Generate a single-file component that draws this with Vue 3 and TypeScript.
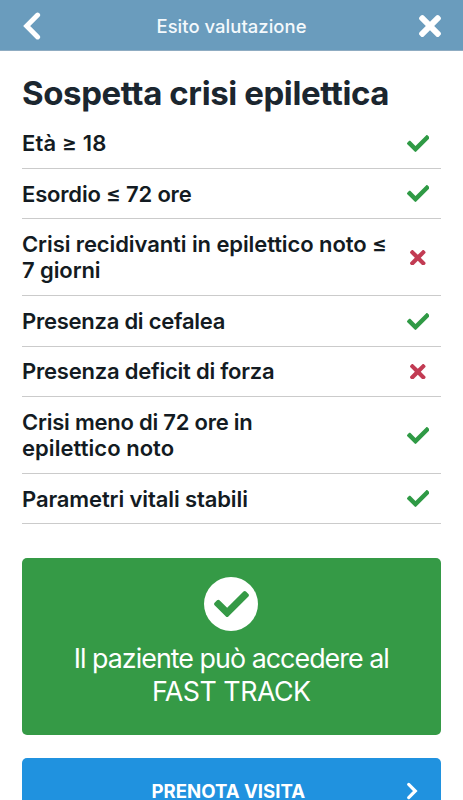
<script setup lang="ts">
interface Line {
  text: string
  // letter spacing in hundredths of a pixel
  track: number
}
interface Criterion {
  lines: Line[]
  met: boolean
}

const criteria: Criterion[] = [
  { lines: [{ text: 'Età ≥ 18', track: 18 }], met: true },
  { lines: [{ text: 'Esordio ≤ 72 ore', track: -18 }], met: true },
  {
    lines: [
      { text: 'Crisi recidivanti in epilettico noto ≤', track: -9 },
      { text: '7 giorni', track: -10 },
    ],
    met: false,
  },
  { lines: [{ text: 'Presenza di cefalea', track: -25 }], met: true },
  { lines: [{ text: 'Presenza deficit di forza', track: -22 }], met: false },
  {
    lines: [
      { text: 'Crisi meno di 72 ore in', track: -23 },
      { text: 'epilettico noto', track: 5 },
    ],
    met: true,
  },
  { lines: [{ text: 'Parametri vitali stabili', track: -11 }], met: true },
]

const checkPath =
  'M173.898 439.404l-166.4-166.4c-9.997-9.997-9.997-26.206 0-36.204l36.203-36.204c9.997-9.998 26.207-9.998 36.204 0L192 312.69 432.095 72.596c9.997-9.997 26.207-9.997 36.204 0l36.203 36.204c9.997 9.997 9.997 26.206 0 36.204l-294.4 294.401c-9.998 9.997-26.207 9.997-36.204-.001z'
const timesPath =
  'M242.72 256l100.07-100.07c12.28-12.28 12.28-32.19 0-44.48l-22.24-22.24c-12.28-12.28-32.19-12.28-44.48 0L176 189.28 75.93 89.21c-12.28-12.28-32.19-12.28-44.48 0L9.21 111.45c-12.28 12.28-12.28 32.19 0 44.48L109.28 256 9.21 356.07c-12.28 12.28-12.28 32.19 0 44.48l22.24 22.24c12.28 12.28 32.2 12.28 44.48 0L176 322.72l100.07 100.07c12.28 12.28 32.2 12.28 44.48 0l22.24-22.24c12.28-12.28 12.28-32.19 0-44.48L242.72 256z'
</script>

<template>
  <div class="screen">
    <header class="bar">
      <button class="bar-btn" type="button" aria-label="Indietro">
        <svg class="back" viewBox="0 0 18 28"><path d="M14.6 3.1 3.7 14l10.9 10.9" /></svg>
      </button>
      <span class="bar-title">Esito valutazione</span>
      <button class="bar-btn end" type="button" aria-label="Chiudi">
        <svg class="close" viewBox="0 80 352 352"><path :d="timesPath" /></svg>
      </button>
    </header>
    <main class="content">
      <h1>Sospetta crisi epilettica</h1>
      <ul class="list">
        <li v-for="(c, i) in criteria" :key="i" class="row">
          <span class="label">
            <span
              v-for="line in c.lines"
              :key="line.text"
              class="line"
              :style="{ letterSpacing: line.track / 100 + 'px' }"
              >{{ line.text }}</span
            >
          </span>
          <span class="mark">
            <svg v-if="c.met" class="check" viewBox="0 65 512 382"><path :d="checkPath" /></svg>
            <svg v-else class="times" viewBox="0 80 352 352"><path :d="timesPath" /></svg>
          </span>
        </li>
      </ul>
      <section class="result">
        <span class="badge">
          <svg viewBox="0 65 512 382"><path :d="checkPath" /></svg>
        </span>
        <p>Il paziente può accedere al<br /><span class="track">FAST TRACK</span></p>
      </section>
      <button class="book" type="button">
        <span>PRENOTA VISITA</span>
        <svg class="chev" viewBox="0 0 12 18"><path d="M2.7 2.4 9.3 9l-6.6 6.6" /></svg>
      </button>
    </main>
  </div>
</template>

<style>
body {
  background: #fff;
  overflow: hidden;
}
</style>

<style scoped>
.screen {
  height: 800px;
  overflow: hidden;
  font-family: Inter, 'Liberation Sans', sans-serif;
  color: #131b22;
  display: flex;
  flex-direction: column;
}
button {
  border: 0;
  margin: 0;
  padding: 0;
  background: none;
  font: inherit;
}
svg {
  display: block;
}
.bar {
  flex: none;
  box-sizing: border-box;
  height: 51px;
  padding: 1px 22px 0;
  background: #6a9cbd;
  border-bottom: 1px solid #8facc2;
  display: grid;
  grid-template-columns: 30px 1fr 30px;
  align-items: center;
}
.bar-btn {
  display: flex;
}
.bar-btn.end {
  justify-content: flex-end;
}
.back {
  width: 18px;
  height: 28px;
  margin-left: 1px;
  fill: none;
  stroke: #fff;
  stroke-width: 5;
  stroke-linecap: round;
}
.close {
  width: 22px;
  height: 22px;
  fill: #fff;
}
.bar-title {
  text-align: center;
  color: #f4f9fc;
  font-size: 18.4px;
  font-weight: 500;
  letter-spacing: 0.06px;
  line-height: 24px;
}
.content {
  flex: none;
  padding: 19px 22px 0;
}
h1 {
  margin: 0;
  color: #1b262f;
  font-size: 33px;
  line-height: 46px;
  font-weight: 700;
  letter-spacing: -0.4px;
  white-space: nowrap;
}
.list {
  list-style: none;
  width: 418.5px;
  margin: 2.3px 0 0;
  padding: 0;
}
.row {
  display: flex;
  align-items: center;
  justify-content: space-between;
  padding: 11.8px 0 11.2px;
  border-bottom: 1px solid #cbcbcb;
  font-size: 22px;
  line-height: 26.45px;
  font-weight: 600;
}
.line {
  display: block;
  white-space: nowrap;
}
.mark {
  width: 45px;
  flex: none;
  display: flex;
  justify-content: center;
}
.check {
  width: 22.6px;
  height: 17px;
  fill: #2f9a45;
}
.times {
  width: 15.6px;
  height: 15.6px;
  fill: #c23b53;
}
.result {
  box-sizing: border-box;
  width: 418.5px;
  height: 176.5px;
  margin-top: 34px;
  padding-top: 18.3px;
  border-radius: 5px;
  background: #359a46;
  color: #fff;
  display: flex;
  flex-direction: column;
  align-items: center;
}
.badge {
  width: 54px;
  height: 54px;
  border-radius: 50%;
  background: #fff;
  display: flex;
  align-items: center;
  justify-content: center;
}
.badge svg {
  width: 35px;
  height: 26px;
  fill: #359a46;
}
.result p {
  margin: 11px 0 0;
  text-align: center;
  font-size: 26.8px;
  line-height: 33px;
  font-weight: 400;
  letter-spacing: -0.95px;
  white-space: nowrap;
}
.result .track {
  letter-spacing: -0.5px;
}
.book {
  width: 418.5px;
  height: 66px;
  margin-top: 22.8px;
  border-radius: 5px;
  background: #2092df;
  color: #fff;
  font-size: 18.6px;
  line-height: 24px;
  font-weight: 700;
  display: grid;
  grid-template-columns: 58px 1fr 58px;
  align-items: center;
}
.book span {
  grid-column: 2;
  margin-left: -6px;
}
.chev {
  width: 12px;
  height: 18px;
  justify-self: center;
  fill: none;
  stroke: #fff;
  stroke-width: 3.2;
  stroke-linecap: round;
}
</style>
